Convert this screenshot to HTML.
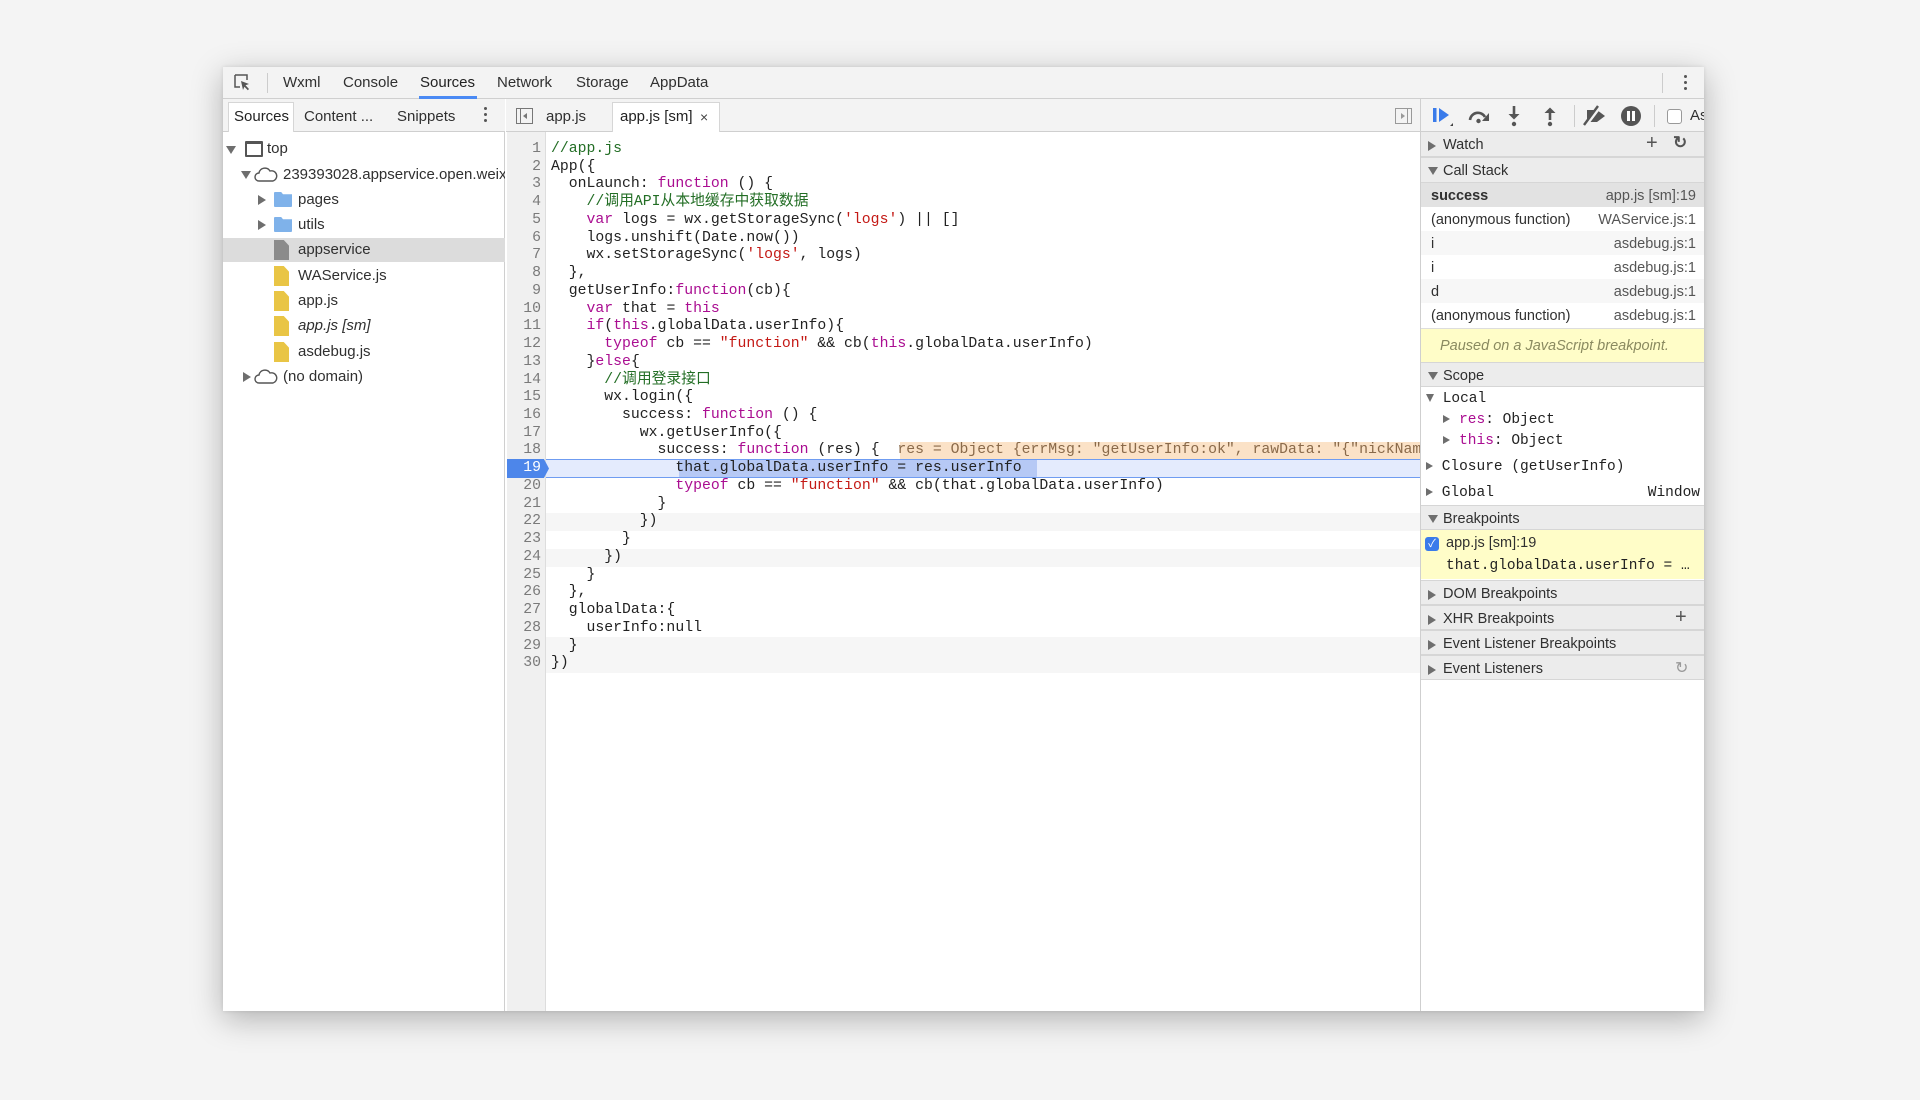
<!DOCTYPE html>
<html><head><meta charset="utf-8"><style>
*{box-sizing:border-box;margin:0;padding:0}
body{width:1920px;height:1100px;background:#f4f4f4;position:relative;overflow:hidden;font-family:"Liberation Sans","Noto Sans CJK SC",sans-serif;color:#303030}
.a{position:absolute}
.win{left:223px;top:67px;width:1481px;height:944px;background:#fff;box-shadow:0 8px 30px rgba(0,0,0,.28),0 0 4px rgba(0,0,0,.1)}
.t{font-size:15px;white-space:nowrap}
.mono{font-family:"Liberation Mono","Noto Sans CJK SC",monospace;white-space:pre}
.code{left:328px;top:74px;font-size:14.8px;line-height:17.74px;color:#222}
.k{color:#aa0d91}.s{color:#c41a16}.c{color:#236e25}
.ln{left:284px;width:34px;text-align:right;font-size:14.8px;line-height:17.74px;color:#7a7a7a;top:74px}
.tri{display:inline-block;width:0;height:0;border-left:5px solid transparent;border-right:5px solid transparent;border-top:8px solid #6e6e6e}
.trr{display:inline-block;width:0;height:0;border-top:5px solid transparent;border-bottom:5px solid transparent;border-left:8px solid #6e6e6e}
.file{width:15px;height:20px;background:#e9c545;clip-path:polygon(0 0,65% 0,100% 28%,100% 100%,0 100%)}
.fold{width:18px;height:15px;background:#7fb2ea;border-radius:1px;clip-path:polygon(0 0,40% 0,50% 15%,100% 15%,100% 100%,0 100%)}
.sec{left:0;width:284px;height:25px;background:#ececec;border-top:1px solid #d6d6d6;border-bottom:1px solid #d6d6d6}
.sec span.t{position:absolute;left:22px;top:5px;font-size:14.5px}
.sec .trr,.sec .tri{position:absolute;left:7px;top:9px}
.row{left:0;width:284px;height:24px}
.row .l{position:absolute;left:10px;top:5px;font-size:14.5px}
.row .r{position:absolute;right:9px;top:5px;font-size:14.5px;color:#555}
</style></head><body>
<div class="a win">
 <div class="a" style="left:0;top:0;width:1481px;height:32px;background:#f3f3f3;border-bottom:1px solid #cfcfcf"></div>
 <svg class="a" style="left:11px;top:7px" width="18" height="18" viewBox="0 0 18 18"><path d="M1 1h12v5M1 1v12h5" fill="none" stroke="#555" stroke-width="1.5"/><path d="M7 7l8 3-3.5 1.2L15 15l-1.2 1.2-3.4-3.5L9 16z" fill="#555"/></svg>
 <div class="a" style="left:44px;top:6px;width:1px;height:20px;background:#ccc"></div>
 <div class="a t" style="left:60px;top:7px">Wxml</div>
 <div class="a t" style="left:120px;top:7px">Console</div>
 <div class="a t" style="left:197px;top:7px;color:#222">Sources</div>
 <div class="a" style="left:196px;top:29px;width:58px;height:3px;background:#4a8af4"></div>
 <div class="a t" style="left:274px;top:7px">Network</div>
 <div class="a t" style="left:353px;top:7px">Storage</div>
 <div class="a t" style="left:427px;top:7px">AppData</div>
 <div class="a" style="left:1439px;top:6px;width:1px;height:20px;background:#ccc"></div>
 <div class="a" style="left:1461px;top:8px;width:3px;height:3px;background:#555;border-radius:2px;box-shadow:0 6px 0 #555,0 12px 0 #555"></div>

 <div class="a" style="left:0;top:32px;width:282px;height:912px;background:#fff;border-right:1px solid #cfcfcf"></div>
 <div class="a" style="left:0;top:32px;width:282px;height:33px;background:#f3f3f3;border-bottom:1px solid #cfcfcf"></div>
 <div class="a" style="left:5px;top:35px;width:66px;height:30px;background:#fff;border:1px solid #d6d6d6;border-bottom:none"></div>
 <div class="a t" style="left:11px;top:41px;color:#222">Sources</div>
 <div class="a t" style="left:81px;top:41px">Content ...</div>
 <div class="a t" style="left:174px;top:41px">Snippets</div>
 <div class="a" style="left:261px;top:40px;width:3px;height:3px;background:#555;border-radius:2px;box-shadow:0 6px 0 #555,0 12px 0 #555"></div>

 <div class="a" style="left:0;top:171px;width:282px;height:24px;background:#dcdcdc"></div>
 <span class="a tri" style="left:3px;top:79px"></span>
 <div class="a" style="left:22px;top:74px;width:18px;height:16px;border:2px solid #555;border-top-width:3px;border-radius:1px"></div>
 <div class="a t" style="left:44px;top:73px">top</div>
 <span class="a tri" style="left:18px;top:104px"></span>
 <svg class="a" style="left:31px;top:99px" width="24" height="16" viewBox="0 0 24 16"><path d="M5 15a4 4 0 0 1 0-8 6 6 0 0 1 11-2 5 5 0 0 1 3 10z" fill="none" stroke="#555" stroke-width="1.4"/></svg>
 <div class="a t" style="left:60px;top:99px;width:222px;overflow:hidden">239393028.appservice.open.weixin.qq.com</div>
 <span class="a trr" style="left:35px;top:128px"></span>
 <div class="a fold" style="left:51px;top:125px"></div>
 <div class="a t" style="left:75px;top:124px">pages</div>
 <span class="a trr" style="left:35px;top:153px"></span>
 <div class="a fold" style="left:51px;top:150px"></div>
 <div class="a t" style="left:75px;top:149px">utils</div>
 <div class="a file" style="left:51px;top:173px;background:#8b8b8b"></div>
 <div class="a t" style="left:75px;top:174px">appservice</div>
 <div class="a file" style="left:51px;top:199px"></div>
 <div class="a t" style="left:75px;top:200px">WAService.js</div>
 <div class="a file" style="left:51px;top:224px"></div>
 <div class="a t" style="left:75px;top:225px">app.js</div>
 <div class="a file" style="left:51px;top:249px"></div>
 <div class="a t" style="left:75px;top:250px;font-style:italic">app.js [sm]</div>
 <div class="a file" style="left:51px;top:275px"></div>
 <div class="a t" style="left:75px;top:276px">asdebug.js</div>
 <span class="a trr" style="left:20px;top:305px"></span>
 <svg class="a" style="left:31px;top:301px" width="24" height="16" viewBox="0 0 24 16"><path d="M5 15a4 4 0 0 1 0-8 6 6 0 0 1 11-2 5 5 0 0 1 3 10z" fill="none" stroke="#555" stroke-width="1.4"/></svg>
 <div class="a t" style="left:60px;top:301px">(no domain)</div>

 <div class="a" style="left:283px;top:32px;width:914px;height:33px;background:#f3f3f3;border-bottom:1px solid #cfcfcf"></div>
 <div class="a" style="left:293px;top:41px;width:17px;height:16px;border:1px solid #777"><div class="a" style="left:3px;top:0;width:1px;height:14px;background:#777"></div><div class="a" style="left:6px;top:4px;border-top:3px solid transparent;border-bottom:3px solid transparent;border-right:4px solid #777"></div></div>
 <div class="a t" style="left:323px;top:41px">app.js</div>
 <div class="a" style="left:389px;top:35px;width:108px;height:30px;background:#fff;border:1px solid #d6d6d6;border-bottom:none"></div>
 <div class="a t" style="left:397px;top:41px;color:#222">app.js [sm]</div>
 <div class="a t" style="left:477px;top:42px;font-size:14px;color:#444">×</div>
 <div class="a" style="left:1172px;top:41px;width:17px;height:16px;border:1px solid #999"><div class="a" style="left:11px;top:0;width:1px;height:14px;background:#999"></div><div class="a" style="left:5px;top:4px;border-top:3px solid transparent;border-bottom:3px solid transparent;border-left:4px solid #999"></div></div>

 <div class="a" style="left:284px;top:65px;width:39px;height:879px;background:#f0f0f0;border-right:1px solid #ddd"></div>
 <div class="a" style="left:323px;top:446px;width:874px;height:17.7px;background:#f6f6f6"></div>
 <div class="a" style="left:323px;top:482px;width:874px;height:17.7px;background:#f6f6f6"></div>
 <div class="a" style="left:323px;top:570px;width:874px;height:35.5px;background:#f6f6f6"></div>
 <div class="a" style="left:323px;top:392px;width:874px;height:19px;background:#e4ebfd;border-top:1px solid #6f9cf1;border-bottom:1px solid #6f9cf1"></div>
 <div class="a" style="left:284px;top:392px;width:42px;height:19px;background:#4d86ea;clip-path:polygon(0 0,88% 0,100% 50%,88% 100%,0 100%)"></div>
 <div class="a" style="left:456px;top:393px;width:358px;height:17px;background:#b6c9f5"></div>
 <div class="a" style="left:677px;top:375px;width:520px;height:17px;background:#fbe2c7"></div>
<div class="a mono ln">1
2
3
4
5
6
7
8
9
10
11
12
13
14
15
16
17
18
<span style="color:#fff">19</span>
20
21
22
23
24
25
26
27
28
29
30</div>
<div class="a mono code" style="width:869px;overflow:hidden"><span class="c">//app.js</span>
App({
  onLaunch: <span class="k">function</span> () {
    <span class="c">//调用API从本地缓存中获取数据</span>
    <span class="k">var</span> logs = wx.getStorageSync(<span class="s">'logs'</span>) || []
    logs.unshift(Date.now())
    wx.setStorageSync(<span class="s">'logs'</span>, logs)
  },
  getUserInfo:<span class="k">function</span>(cb){
    <span class="k">var</span> that = <span class="k">this</span>
    <span class="k">if</span>(<span class="k">this</span>.globalData.userInfo){
      <span class="k">typeof</span> cb == <span class="s">"function"</span> &amp;&amp; cb(<span class="k">this</span>.globalData.userInfo)
    }<span class="k">else</span>{
      <span class="c">//调用登录接口</span>
      wx.login({
        success: <span class="k">function</span> () {
          wx.getUserInfo({
            success: <span class="k">function</span> (res) {  <span style="color:#8a6a4a">res = Object {errMsg: "getUserInfo:ok", rawData: "{"nickName":"x"}"</span>
              that.globalData.userInfo = res.userInfo
              <span class="k">typeof</span> cb == <span class="s">"function"</span> &amp;&amp; cb(that.globalData.userInfo)
            }
          })
        }
      })
    }
  },
  globalData:{
    userInfo:null
  }
})</div>

 <div class="a" style="left:1197px;top:32px;width:284px;height:912px;background:#fff;border-left:1px solid #cfcfcf;overflow:hidden">
  <div class="a" style="left:0;top:0;width:284px;height:33px;background:#f3f3f3;border-bottom:1px solid #cfcfcf"></div>
  <svg class="a" style="left:10px;top:6px" width="24" height="22" viewBox="0 0 24 22"><rect x="2" y="3" width="3.5" height="14" fill="#3a7bea"/><path d="M8 3l10 7-10 7z" fill="#3a7bea"/><path d="M19 21l3-3v3z" fill="#444"/></svg>
  <svg class="a" style="left:46px;top:8px" width="24" height="18" viewBox="0 0 24 18"><path d="M3 13a8 8 0 0 1 15-3" fill="none" stroke="#555" stroke-width="2.6"/><path d="M22 6v8h-7z" fill="#555"/><circle cx="11.5" cy="14" r="2.2" fill="#555"/></svg>
  <svg class="a" style="left:86px;top:6px" width="14" height="22" viewBox="0 0 14 22"><path d="M7 1v10" stroke="#555" stroke-width="2.6"/><path d="M1.5 9h11L7 14.5z" fill="#555"/><circle cx="7" cy="19" r="2.2" fill="#555"/></svg>
  <svg class="a" style="left:122px;top:6px" width="14" height="22" viewBox="0 0 14 22"><path d="M7 7v8" stroke="#555" stroke-width="2.6"/><path d="M1.5 8h11L7 2.5z" fill="#555"/><circle cx="7" cy="19" r="2.2" fill="#555"/></svg>
  <div class="a" style="left:153px;top:6px;width:1px;height:22px;background:#ccc"></div>
  <svg class="a" style="left:161px;top:6px" width="26" height="22" viewBox="0 0 26 22"><path d="M5 5h10l8 6-8 6H5z" fill="#555"/><path d="M3 21L18 1" stroke="#f3f3f3" stroke-width="4"/><path d="M2 20L16 1" stroke="#555" stroke-width="2.4"/></svg>
  <svg class="a" style="left:199px;top:6px" width="22" height="22" viewBox="0 0 22 22"><circle cx="11" cy="11" r="10" fill="#555"/><rect x="7" y="6" width="3" height="10" fill="#fff"/><rect x="12" y="6" width="3" height="10" fill="#fff"/></svg>
  <div class="a" style="left:233px;top:6px;width:1px;height:22px;background:#ccc"></div>
  <div class="a" style="left:246px;top:10px;width:15px;height:15px;border:1px solid #999;border-radius:3px;background:#fff"></div>
  <div class="a t" style="left:269px;top:8px;font-size:15px">Async</div>

  <div class="a sec" style="top:33px;height:25px;border-top:none"><span class="trr"></span><span class="t">Watch</span><span class="a" style="left:225px;top:0;font-size:20px;color:#555">+</span><span class="a" style="left:252px;top:1px;font-size:17px;color:#555;font-weight:bold">↻</span></div>
  <div class="a sec" style="top:58px;height:26px"><span class="tri"></span><span class="t">Call Stack</span></div>
  <div class="a row" style="top:84px;background:#e2e2e2"><span class="l" style="font-weight:bold">success</span><span class="r">app.js [sm]:19</span></div>
  <div class="a row" style="top:108px"><span class="l">(anonymous function)</span><span class="r">WAService.js:1</span></div>
  <div class="a row" style="top:132px;background:#f7f7f7"><span class="l">i</span><span class="r">asdebug.js:1</span></div>
  <div class="a row" style="top:156px"><span class="l">i</span><span class="r">asdebug.js:1</span></div>
  <div class="a row" style="top:180px;background:#f7f7f7"><span class="l">d</span><span class="r">asdebug.js:1</span></div>
  <div class="a row" style="top:204px"><span class="l">(anonymous function)</span><span class="r">asdebug.js:1</span></div>
  <div class="a" style="left:0;top:229px;width:284px;height:34px;background:#fffdc8;border-top:1px solid #ddd"><span class="a t" style="left:19px;top:9px;font-style:italic;color:#8a8a60;font-size:14.5px">Paused on a JavaScript breakpoint.</span></div>
  <div class="a sec" style="top:263px"><span class="tri"></span><span class="t">Scope</span></div>
  <div class="a mono" style="left:5px;top:290px;font-size:14.5px;line-height:21px;color:#222"><span class="tri" style="border-width:8px 4px 0 4px"></span> Local
  <span class="trr" style="border-width:4px 0 4px 7px"></span> <span class="k">res</span>: Object
  <span class="trr" style="border-width:4px 0 4px 7px"></span> <span class="k">this</span>: Object</div>
  <div class="a mono" style="left:5px;top:360px;font-size:14.5px;color:#222"><span class="trr" style="border-width:4px 0 4px 7px"></span> Closure (getUserInfo)</div>
  <div class="a mono" style="left:5px;top:386px;font-size:14.5px;color:#222"><span class="trr" style="border-width:4px 0 4px 7px"></span> Global</div>
  <div class="a mono" style="right:4px;top:386px;font-size:14.5px;color:#222">Window</div>
  <div class="a sec" style="top:406px;height:25px"><span class="tri"></span><span class="t">Breakpoints</span></div>
  <div class="a" style="left:0;top:431px;width:284px;height:49px;background:#fffdc8"></div>
  <div class="a" style="left:4px;top:438px;width:14px;height:14px;background:#3a7bea;border-radius:3px;color:#fff;font-size:11px;text-align:center;line-height:14px">✓</div>
  <div class="a t" style="left:25px;top:436px;font-size:14.5px">app.js [sm]:19</div>
  <div class="a mono" style="left:25px;top:459px;font-size:14.5px;color:#222">that.globalData.userInfo = …</div>
  <div class="a sec" style="top:481px"><span class="trr"></span><span class="t">DOM Breakpoints</span></div>
  <div class="a sec" style="top:506px"><span class="trr"></span><span class="t">XHR Breakpoints</span><span class="a" style="left:254px;top:0;font-size:20px;color:#555">+</span></div>
  <div class="a sec" style="top:531px"><span class="trr"></span><span class="t">Event Listener Breakpoints</span></div>
  <div class="a sec" style="top:556px"><span class="trr"></span><span class="t">Event Listeners</span><span class="a" style="left:254px;top:2px;font-size:16px;color:#999">↻</span></div>
 </div>
</div>
</body></html>
